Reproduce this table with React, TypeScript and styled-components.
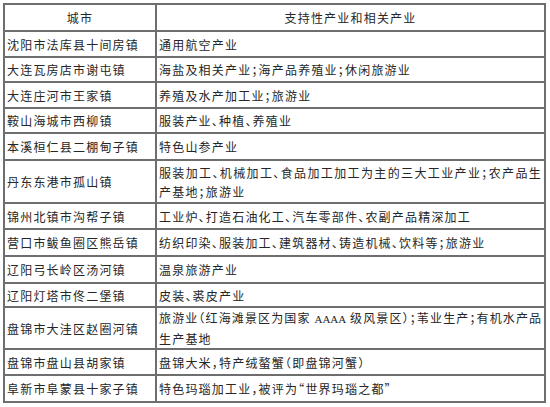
import React from "react";
import styled, { createGlobalStyle } from "styled-components";

const Global = createGlobalStyle`
  html, body {
    margin: 0;
    padding: 0;
    background: #ffffff;
  }
  body {
    font-family: "Noto Sans CJK SC", "Noto Sans", sans-serif;
  }
`;

const Page = styled.div`
  width: 550px;
  height: 407px;
  padding: 3px 0 0 3px;
  box-sizing: border-box;
  background: #fff;
`;

const Table = styled.div`
  display: grid;
  grid-template-columns: 152px 389px;
  border-top: 2px solid #6e6e6e;
  border-left: 2px solid #6e6e6e;
  width: max-content;
`;

const Row = styled.div<{ $h: number }>`
  display: contents;
  & > div {
    height: ${(p) => p.$h}px;
  }
`;

const Cell = styled.div<{ $center?: boolean }>`
  box-sizing: border-box;
  border-right: 2px solid #6e6e6e;
  border-bottom: 2px solid #6e6e6e;
  padding: 0 2px 0 2px;
  display: flex;
  flex-direction: column;
  justify-content: center;
  align-items: ${(p) => (p.$center ? "center" : "stretch")};
  font-size: 12px;
  letter-spacing: 1.2px;
  color: #262626;
  line-height: 19px;
  font-feature-settings: "halt";
  white-space: nowrap;
  overflow: hidden;
`;

const Line = styled.span<{ $justify?: boolean; $tight?: boolean }>`
  display: block;
  text-align: ${(p) => (p.$justify ? "justify" : "left")};
  text-align-last: ${(p) => (p.$justify ? "justify" : "auto")};
  letter-spacing: ${(p) => (p.$tight ? "0.9px" : "inherit")};
`;

const Latin = styled.span`
  font-family: "Liberation Serif", serif;
  font-size: 11px;
  letter-spacing: 0;
`;

type RowData = { city: string; h: number; tight?: boolean; lines: React.ReactNode[] };

const rows: RowData[] = [
  { city: "沈阳市法库县十间房镇", h: 26, lines: ["通用航空产业"] },
  { city: "大连瓦房店市谢屯镇", h: 25, lines: ["海盐及相关产业；海产品养殖业；休闲旅游业"] },
  { city: "大连庄河市王家镇", h: 26, lines: ["养殖及水产加工业；旅游业"] },
  { city: "鞍山海城市西柳镇", h: 25, lines: ["服装产业、种植、养殖业"] },
  { city: "本溪桓仁县二棚甸子镇", h: 27, lines: ["特色山参产业"] },
  {
    city: "丹东东港市孤山镇",
    h: 43,
    lines: ["服装加工、机械加工、食品加工加工为主的三大工业产业；农产品生", "产基地；旅游业"],
  },
  { city: "锦州北镇市沟帮子镇", h: 26, lines: ["工业炉、打造石油化工、汽车零部件、农副产品精深加工"] },
  { city: "营口市鲅鱼圈区熊岳镇", h: 27, lines: ["纺织印染、服装加工、建筑器材、铸造机械、饮料等；旅游业"] },
  { city: "辽阳弓长岭区汤河镇", h: 27, lines: ["温泉旅游产业"] },
  { city: "辽阳灯塔市佟二堡镇", h: 24, lines: ["皮装、裘皮产业"] },
  {
    city: "盘锦市大洼区赵圈河镇",
    h: 42,
    tight: true,
    lines: [
      <>
        旅游业（红海滩景区为国家 <Latin>AAAA</Latin> 级风景区）；苇业生产；有机水产品
      </>,
      "生产基地",
    ],
  },
  { city: "盘锦市盘山县胡家镇", h: 26, lines: ["盘锦大米，特产绒螯蟹（即盘锦河蟹）"] },
  { city: "阜新市阜蒙县十家子镇", h: 27, lines: ["特色玛瑙加工业，被评为“世界玛瑙之都”"] },
];

export default function App() {
  return (
    <>
      <Global />
      <Page>
        <Table>
          <Row $h={27}>
            <Cell $center>城市</Cell>
            <Cell $center>支持性产业和相关产业</Cell>
          </Row>
          {rows.map((r) => (
            <Row key={r.city} $h={r.h}>
              <Cell>{r.city}</Cell>
              <Cell>
                {r.lines.map((l, i) => {
                  const justify = r.lines.length > 1 && i < r.lines.length - 1;
                  return (
                    <Line key={i} $justify={justify} $tight={justify && r.tight}>
                      {l}
                    </Line>
                  );
                })}
              </Cell>
            </Row>
          ))}
        </Table>
      </Page>
    </>
  );
}
